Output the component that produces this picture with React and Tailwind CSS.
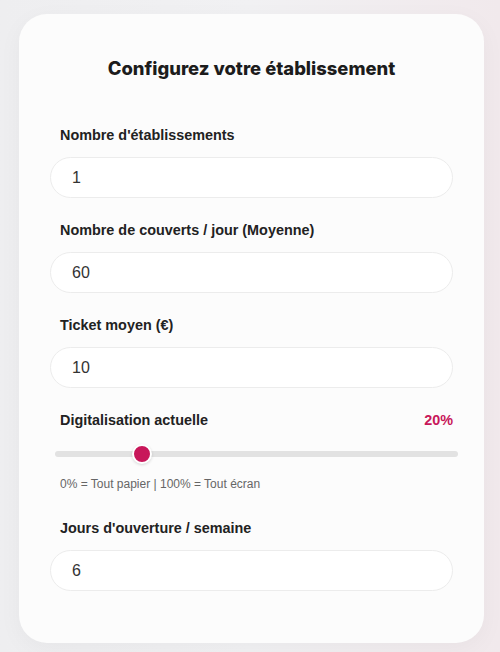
import { useState } from 'react'

const fields = [
  { key: 'sites', label: "Nombre d'établissements" },
  { key: 'covers', label: 'Nombre de couverts / jour (Moyenne)' },
  { key: 'ticket', label: 'Ticket moyen (€)' },
]

function Field({ label, value, onChange }) {
  return (
    <div className="mb-[22px]">
      <label className="block pl-[10px] text-[14.4px] leading-[20px] font-bold text-[#222]">{label}</label>
      <input
        value={value}
        onChange={e => onChange(e.target.value)}
        className="mt-[12px] block w-full h-[41px] rounded-full border border-[#ececec] bg-white pl-[21px] text-[16px] text-[#333] outline-none"
      />
    </div>
  )
}

export default function App() {
  const [values, setValues] = useState({ sites: '1', covers: '60', ticket: '10', days: '6' })
  const digital = 20

  const set = key => v => setValues(prev => ({ ...prev, [key]: v }))

  return (
    <div
      className="min-h-screen bg-gradient-to-r from-[#eeeef0] via-[#f1f1f3] to-[#f1e9ec] pt-[14px] pl-[19px]"
      style={{ fontFamily: '"Liberation Sans", Arial, sans-serif' }}
    >
      <div className="w-[465px] rounded-[28px] bg-[#fcfcfc] px-[31px] pt-[42px] pb-[30px] shadow-[0_6px_24px_rgba(0,0,0,0.04)]">
        <h2
          className="text-center text-[18.4px] leading-[24px] font-extrabold text-[#1c1c1c] mb-[45px]"
          style={{ fontFamily: 'Inter, sans-serif' }}
        >
          Configurez votre établissement
        </h2>

        {fields.map(f => (
          <Field key={f.key} label={f.label} value={values[f.key]} onChange={set(f.key)} />
        ))}

        {/* Curseur de digitalisation */}
        <div className="mb-[26px]">
          <div className="flex items-center justify-between pl-[10px]">
            <span className="text-[14.4px] leading-[20px] font-bold text-[#222]">Digitalisation actuelle</span>
            <span className="text-[14.4px] leading-[20px] font-bold text-[#c8175a]">{digital}%</span>
          </div>
          <div className="relative ml-[5px] -mr-[5px] mt-[21px] h-[6px] rounded-full bg-[#e2e2e2]">
            <div
              className="absolute top-1/2 h-[20px] w-[20px] -translate-y-1/2 rounded-full border-2 border-white bg-[#c8175a] shadow-[0_1px_3px_rgba(0,0,0,0.15)]"
              style={{ left: `calc(${digital / 100} * (100% - 20px))` }}
            />
          </div>
          <p className="mt-[19px] pl-[10px] text-[12px] leading-[16px] text-[#666]">
            0% = Tout papier | 100% = Tout écran
          </p>
        </div>

        <Field label="Jours d'ouverture / semaine" value={values.days} onChange={set('days')} />
      </div>
    </div>
  )
}
